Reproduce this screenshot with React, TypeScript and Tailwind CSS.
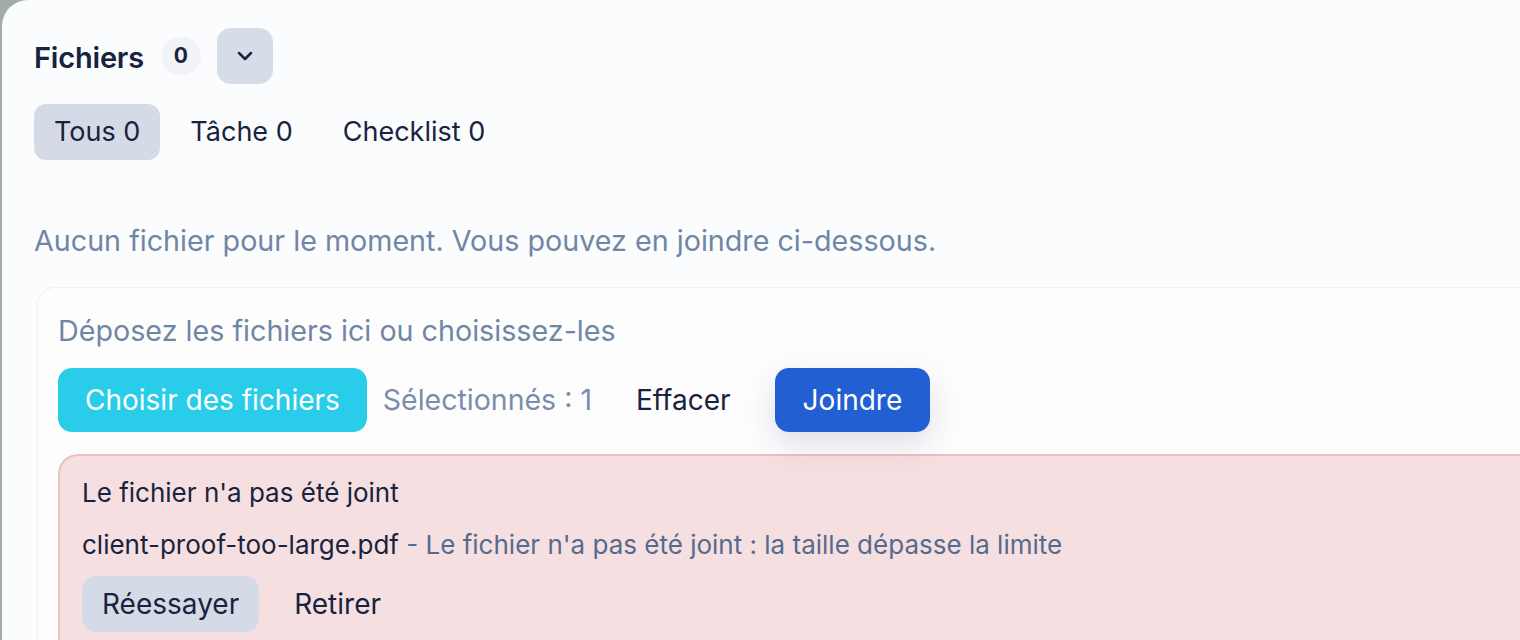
import React from "react";
import { ChevronDown } from "lucide-react";

const TABS = [
  { id: "all", label: "Tous 0", active: true },
  { id: "task", label: "Tâche 0", active: false },
  { id: "checklist", label: "Checklist 0", active: false },
];

export default function App() {
  return (
    <div className="w-[1520px] h-[640px] overflow-hidden bg-[#a2acaa] font-['Inter',sans-serif] text-[#18233d]">
      <div className="ml-[2px] h-full rounded-tl-[26px] bg-[#fbfcfe] pl-[32px] pt-[28px]">
        {/* Header */}
        <div className="flex items-center h-[56px]">
          <h2 className="pt-[3px] text-[29px] font-semibold tracking-[-0.2px]">Fichiers</h2>
          <span className="ml-[17px] flex h-[38px] w-[40px] items-center justify-center rounded-full bg-[#f1f3f7] text-[21px] font-bold">
            0
          </span>
          <button className="ml-[16px] flex h-[56px] w-[56px] items-center justify-center rounded-[14px] bg-[#d7dde8]">
            <ChevronDown className="h-[24px] w-[24px]" strokeWidth={2.5} />
          </button>
        </div>

        {/* Tabs */}
        <div className="mt-[20px] flex gap-[10px]">
          {TABS.map((tab) => (
            <button
              key={tab.id}
              className={`h-[56px] rounded-[12px] px-[20px] text-[27px] ${tab.active ? "bg-[#d5dbe6]" : ""}`}
            >
              {tab.label}
            </button>
          ))}
        </div>

        <p className="mt-[63px] text-[28.7px] leading-[36px] text-[#7086a5]">
          Aucun fichier pour le moment. Vous pouvez en joindre ci-dessous.
        </p>

        {/* Dropzone */}
        <div className="ml-[3px] mt-[28px] rounded-tl-[18px] border border-r-0 border-[#eef0f4] bg-[#fdfdfe] pl-[20px] pt-[25px] pb-[40px]">
          <p className="text-[28.7px] leading-[36px] text-[#7086a5]">Déposez les fichiers ici ou choisissez-les</p>

          <div className="mt-[19px] flex items-center gap-[16px]">
            <button className="h-[64px] rounded-[14px] bg-[#29cdea] px-[27px] text-[28px] text-white">
              Choisir des fichiers
            </button>
            <span className="text-[28.5px] text-[#7a8dab]">Sélectionnés : 1</span>
            <button className="h-[64px] rounded-[14px] px-[28px] text-[28px]">Effacer</button>
            <button className="h-[64px] rounded-[14px] bg-[#225fd3] px-[28px] text-[28px] text-white shadow-[0_12px_32px_rgba(30,41,80,0.14)]">
              Joindre
            </button>
          </div>

          {/* Error */}
          <div className="mt-[22px] rounded-tl-[20px] border-2 border-r-0 border-[#efbfc0] bg-[#f6dfe1] pl-[22px] pt-[21px] pb-[20px]">
            <p className="text-[26px] leading-[32px]">Le fichier n'a pas été joint</p>
            <p className="mt-[20px] text-[26px] leading-[32px]">
              client-proof-too-large.pdf{" "}
              <span className="text-[#556b8d]">- Le fichier n'a pas été joint : la taille dépasse la limite</span>
            </p>
            <div className="mt-[15px] flex items-center gap-[14px]">
              <button className="h-[56px] rounded-[14px] bg-[#d5dbe6] px-[20px] text-[28px]">Réessayer</button>
              <button className="h-[56px] rounded-[14px] px-[21px] text-[28px]">Retirer</button>
            </div>
          </div>
        </div>
      </div>
    </div>
  );
}
